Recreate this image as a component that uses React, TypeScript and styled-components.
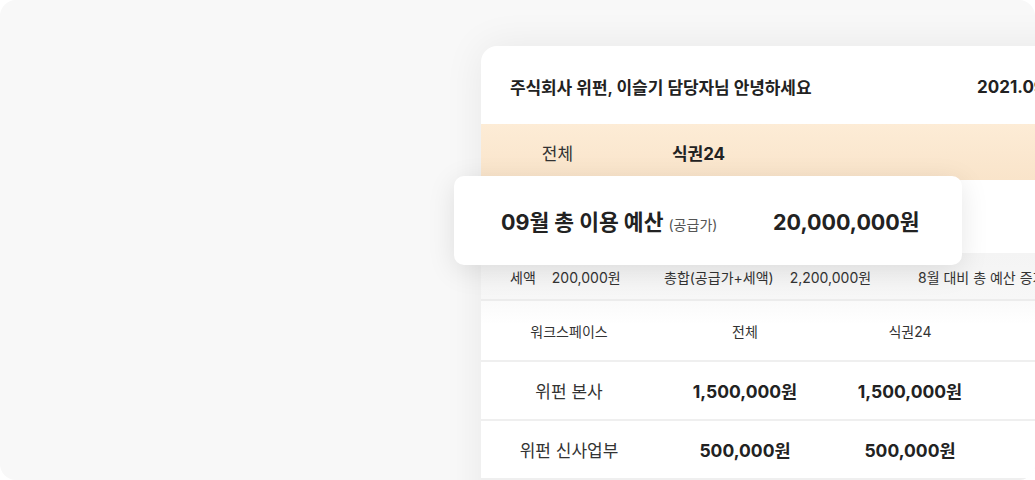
import React from "react";
import styled, { createGlobalStyle } from "styled-components";

const GlobalStyle = createGlobalStyle`
  html, body { margin: 0; padding: 0; background: #ffffff; }
  body { font-family: Inter, "Noto Sans CJK KR", "Noto Sans", sans-serif; color: #222; }
  * { box-sizing: border-box; }
`;

const Stage = styled.div`
  position: relative;
  width: 1035px;
  height: 480px;
  background: #f8f8f8;
  border-radius: 16px;
  overflow: hidden;
  display: flex;
  padding: 46px 0 0 481px;
`;

const MainCard = styled.div`
  flex: 0 0 640px;
  height: 520px;
  background: #ffffff;
  border-radius: 16px 16px 0 0;
  box-shadow: 0 0 40px rgba(0, 0, 0, 0.07);
  display: flex;
  flex-direction: column;
`;

const Header = styled.div`
  height: 78px;
  display: grid;
  grid-template-columns: 467px auto;
  align-items: center;
  padding-left: 29px;
  padding-top: 3px;
`;

const Greeting = styled.div`
  font-size: 17px;
  font-weight: 600;
  color: #222;
  letter-spacing: -0.1px;
  white-space: nowrap;
`;

const DateText = styled.div`
  font-size: 17px;
  font-weight: 700;
  color: #222;
  white-space: nowrap;
`;

const Tabs = styled.div`
  height: 56px;
  background: linear-gradient(#fdecd6, #f9e4ca);
  display: flex;
  padding-left: 6px;
`;

const Tab = styled.div<{ $active?: boolean }>`
  width: 141px;
  display: flex;
  align-items: center;
  justify-content: center;
  font-size: 17px;
  font-weight: ${(p) => (p.$active ? 700 : 400)};
  color: ${(p) => (p.$active ? "#222" : "#333")};
`;

const BudgetRow = styled.div`
  height: 73px;
  background: #ffffff;
`;

const InfoRow = styled.div`
  height: 48px;
  background: linear-gradient(#f4f4f4, #f7f7f7);
  border-bottom: 2px solid #ececec;
  display: flex;
  align-items: center;
  padding-left: 29px;
  padding-top: 2px;
  font-size: 14px;
  color: #333;
`;

const InfoItem = styled.div<{ $width: number }>`
  flex: 0 0 ${(p) => p.$width}px;
  display: flex;
  gap: 16px;
  white-space: nowrap;
`;

const TableRow = styled.div<{ $head?: boolean }>`
  display: grid;
  grid-template-columns: 176px 176px 154px 1fr;
  height: ${(p) => (p.$head ? 61 : 59)}px;
  padding-top: ${(p) => (p.$head ? 1 : 0)}px;
  border-bottom: 2px solid #efefef;
  align-items: center;
  background: ${(p) => (p.$head ? "linear-gradient(#fafafa, #ffffff 40%)" : "#ffffff")};
`;

const Cell = styled.div<{ $kind: "head" | "name" | "amount" }>`
  text-align: center;
  white-space: nowrap;
  font-size: ${(p) => (p.$kind === "head" ? 14 : p.$kind === "name" ? 17 : 17.5)}px;
  font-weight: ${(p) => (p.$kind === "amount" ? 700 : 400)};
  color: ${(p) => (p.$kind === "amount" ? "#222" : "#333")};
`;

const FloatCard = styled.div`
  position: absolute;
  left: 454px;
  top: 176px;
  width: 508px;
  height: 89px;
  background: #ffffff;
  border-radius: 10px;
  box-shadow: 0 6px 28px rgba(0, 0, 0, 0.1);
  display: flex;
  align-items: center;
  padding-left: 47px;
`;

const FloatTitle = styled.div`
  flex: 0 0 272px;
  font-size: 21.5px;
  font-weight: 700;
  color: #222;
  white-space: nowrap;
`;

const Sub = styled.span`
  font-size: 14px;
  font-weight: 400;
  color: #555;
`;

const FloatAmount = styled.div`
  font-size: 21.5px;
  font-weight: 700;
  color: #222;
`;

const rows = [
  { name: "위펀 본사", total: "1,500,000원", meal: "1,500,000원" },
  { name: "위펀 신사업부", total: "500,000원", meal: "500,000원" },
];

export default function App() {
  return (
    <>
      <GlobalStyle />
      <Stage>
        <MainCard>
          <Header>
            <Greeting>주식회사 위펀, 이슬기 담당자님 안녕하세요</Greeting>
            <DateText>2021.09.01</DateText>
          </Header>
          <Tabs>
            <Tab>전체</Tab>
            <Tab $active>식권24</Tab>
          </Tabs>
          <BudgetRow />
          <InfoRow>
            <InfoItem $width={154}>
              <span>세액</span>
              <span>200,000원</span>
            </InfoItem>
            <InfoItem $width={254}>
              <span>총합(공급가+세액)</span>
              <span>2,200,000원</span>
            </InfoItem>
            <InfoItem $width={240}>
              <span>8월 대비 총 예산 증가</span>
            </InfoItem>
          </InfoRow>
          <TableRow $head>
            <Cell $kind="head">워크스페이스</Cell>
            <Cell $kind="head">전체</Cell>
            <Cell $kind="head">식권24</Cell>
            <div />
          </TableRow>
          {rows.map((r) => (
            <TableRow key={r.name}>
              <Cell $kind="name">{r.name}</Cell>
              <Cell $kind="amount">{r.total}</Cell>
              <Cell $kind="amount">{r.meal}</Cell>
              <div />
            </TableRow>
          ))}
        </MainCard>
        <FloatCard>
          <FloatTitle>
            09월 총 이용 예산 <Sub>(공급가)</Sub>
          </FloatTitle>
          <FloatAmount>20,000,000원</FloatAmount>
        </FloatCard>
      </Stage>
    </>
  );
}
